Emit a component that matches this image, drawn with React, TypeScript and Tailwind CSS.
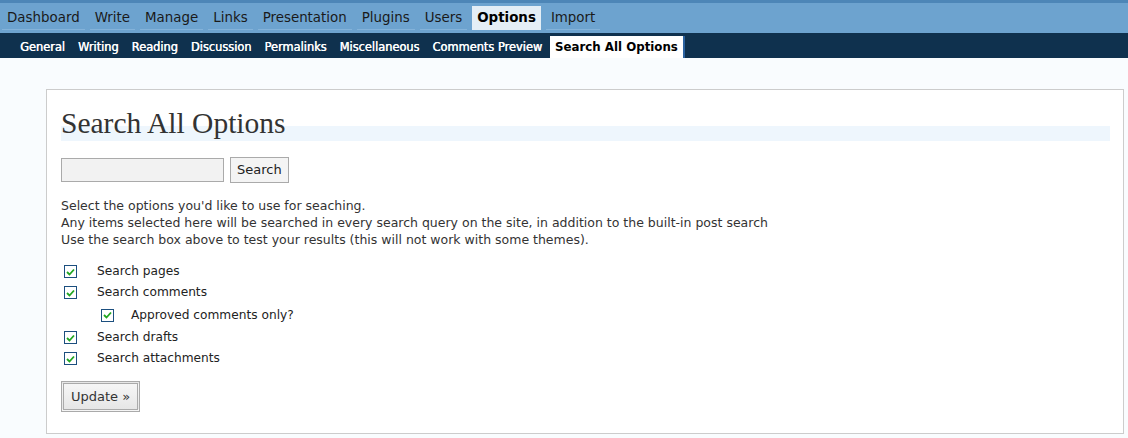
const MENU = ['Dashboard', 'Write', 'Manage', 'Links', 'Presentation', 'Plugins', 'Users', 'Options', 'Import']
const SUBMENU = ['General', 'Writing', 'Reading', 'Discussion', 'Permalinks', 'Miscellaneous', 'Comments Preview', 'Search All Options']

// ─── Checkbox ─────────────────────────────────────────────────────────────────

function Check({ label, indent = false }: { label: string; indent?: boolean }) {
  return (
    <label className={`flex items-center ${indent ? 'pl-[40px] h-[24px]' : 'pl-[3px] h-[21px]'}`}>
      <span className="w-[13px] h-[13px] border border-[#1c4f7f] bg-white flex items-center justify-center shrink-0">
        <svg width="9" height="8" viewBox="0 0 9 8">
          <path d="M1 4 L3.5 6.5 L8 1.5" fill="none" stroke="#21a621" strokeWidth="1.8" />
        </svg>
      </span>
      <span className={indent ? 'ml-[17px]' : 'ml-[20px]'}>{label}</span>
    </label>
  )
}

// ─── Page ─────────────────────────────────────────────────────────────────────

export default function App() {
  return (
    <div className="w-[1128px] h-[438px] bg-[#f9fcfe] overflow-hidden font-['DejaVu_Sans',sans-serif] text-[#333]">

      {/* Top menu */}
      <div className="h-[33px] bg-[#6da3cf] border-t-[3px] border-[#4d86b7] flex items-end pl-[2px]">
        {MENU.map(item => (
          <div
            key={item}
            className={`h-[24px] mb-[3px] mr-[5px] px-[5px] text-[13.4px] leading-[23px] border-b border-[#84b3da] ${
              item === 'Options' ? 'bg-[#e4eef6] font-bold text-black border-[#e4eef6]' : 'text-[#1a1a1a]'
            }`}
          >
            {item}
          </div>
        ))}
      </div>

      {/* Sub menu */}
      <div className="h-[25px] bg-[#0f314e] flex items-end pl-[15px]">
        {SUBMENU.map(item => (
          <div
            key={item}
            className={`h-[22px] mr-[3px] px-[5px] leading-[22px] ${
              item === 'Search All Options'
                ? 'bg-white text-black font-bold text-[11.8px] border-r-2 border-[#2b62a0]'
                : 'text-white text-[11.4px] [text-shadow:0.4px_0_0_#fff]'
            }`}
          >
            {item}
          </div>
        ))}
      </div>

      {/* Panel */}
      <div className="ml-[46px] mt-[31px] w-[1078px] h-[345px] bg-white border border-[#ccc] pl-[14px] pr-[13px]">
        <h2 className="mt-[31px] font-['Liberation_Serif',serif] text-[29.5px] leading-[5px] text-[#333] border-b-[15px] border-[#eef6fd]">
          Search All Options
        </h2>

        <div className="flex items-center mt-[16px]">
          <input className="w-[163px] h-[24px] bg-[#f2f2f2] border border-[#aaa] outline-none" />
          <button className="ml-[6px] h-[26px] px-[6px] bg-[#f4f4f4] border border-[#aaa] text-[13px] text-[#222]">
            Search
          </button>
        </div>

        <div className="mt-[14px] text-[12.5px] leading-[17px]">
          <p>Select the options you'd like to use for seaching.</p>
          <p>Any items selected here will be searched in every search query on the site, in addition to the built-in post search</p>
          <p>Use the search box above to test your results (this will not work with some themes).</p>
        </div>

        <div className="mt-[13px] text-[12.2px] text-[#222]">
          <Check label="Search pages" />
          <Check label="Search comments" />
          <Check label="Approved comments only?" indent />
          <Check label="Search drafts" />
          <Check label="Search attachments" />
        </div>

        <button className="mt-[12px] h-[31px] px-[7px] border-[3px] border-double border-[#aaa] bg-gradient-to-b from-[#f6f6f6] to-[#e6e6e6] text-[13px] text-[#333]">
          Update »
        </button>
      </div>
    </div>
  )
}
